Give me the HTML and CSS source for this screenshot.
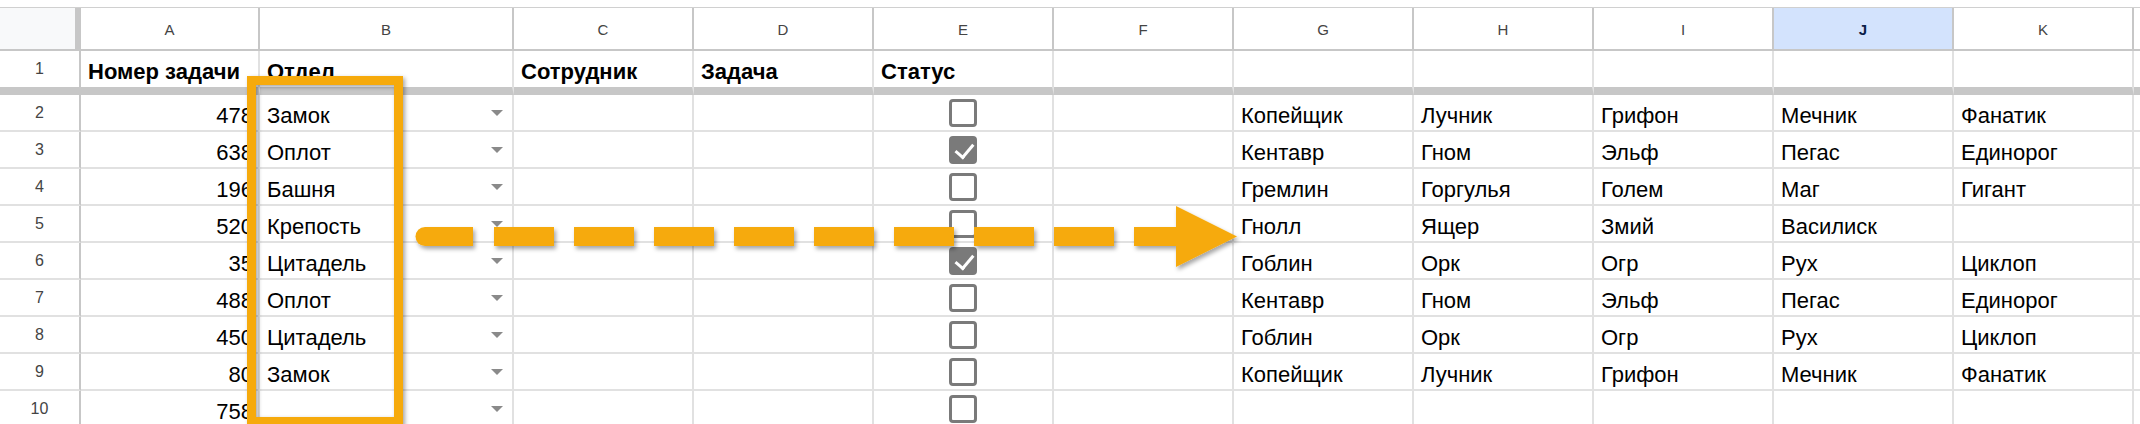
FILE: index.html
```html
<!DOCTYPE html>
<html lang="ru">
<head>
<meta charset="utf-8">
<title>Sheet</title>
<link rel="stylesheet" href="styles.css">
</head>
<body>
<div class="page">
<div class="sheet">
  <div class="corner"></div>
  <div class="ch">A</div><div class="ch">B</div><div class="ch">C</div><div class="ch">D</div><div class="ch">E</div><div class="ch">F</div><div class="ch">G</div><div class="ch">H</div><div class="ch">I</div><div class="ch ch-sel">J</div><div class="ch">K</div><div class="ch"></div>

  <div class="rh rh-frozen">1</div>
  <div class="c f b">Номер задачи</div><div class="c f b">Отдел</div><div class="c f b">Сотрудник</div><div class="c f b">Задача</div><div class="c f b">Статус</div><div class="c f"></div><div class="c f"></div><div class="c f"></div><div class="c f"></div><div class="c f"></div><div class="c f"></div><div class="c f"></div>

  <div class="rh">2</div>
  <div class="c num">478</div><div class="c dd">Замок<span class="arrow"></span></div><div class="c"></div><div class="c"></div><div class="c cb"><span class="box"></span></div><div class="c"></div><div class="c">Копейщик</div><div class="c">Лучник</div><div class="c">Грифон</div><div class="c">Мечник</div><div class="c">Фанатик</div><div class="c"></div>

  <div class="rh">3</div>
  <div class="c num">638</div><div class="c dd">Оплот<span class="arrow"></span></div><div class="c"></div><div class="c"></div><div class="c cb"><span class="box checked"></span></div><div class="c"></div><div class="c">Кентавр</div><div class="c">Гном</div><div class="c">Эльф</div><div class="c">Пегас</div><div class="c">Единорог</div><div class="c"></div>

  <div class="rh">4</div>
  <div class="c num">196</div><div class="c dd">Башня<span class="arrow"></span></div><div class="c"></div><div class="c"></div><div class="c cb"><span class="box"></span></div><div class="c"></div><div class="c">Гремлин</div><div class="c">Горгулья</div><div class="c">Голем</div><div class="c">Маг</div><div class="c">Гигант</div><div class="c"></div>

  <div class="rh">5</div>
  <div class="c num">520</div><div class="c dd">Крепость<span class="arrow"></span></div><div class="c"></div><div class="c"></div><div class="c cb"><span class="box"></span></div><div class="c"></div><div class="c">Гнолл</div><div class="c">Ящер</div><div class="c">Змий</div><div class="c">Василиск</div><div class="c"></div><div class="c"></div>

  <div class="rh">6</div>
  <div class="c num">35</div><div class="c dd">Цитадель<span class="arrow"></span></div><div class="c"></div><div class="c"></div><div class="c cb"><span class="box checked"></span></div><div class="c"></div><div class="c">Гоблин</div><div class="c">Орк</div><div class="c">Огр</div><div class="c">Рух</div><div class="c">Циклоп</div><div class="c"></div>

  <div class="rh">7</div>
  <div class="c num">488</div><div class="c dd">Оплот<span class="arrow"></span></div><div class="c"></div><div class="c"></div><div class="c cb"><span class="box"></span></div><div class="c"></div><div class="c">Кентавр</div><div class="c">Гном</div><div class="c">Эльф</div><div class="c">Пегас</div><div class="c">Единорог</div><div class="c"></div>

  <div class="rh">8</div>
  <div class="c num">450</div><div class="c dd">Цитадель<span class="arrow"></span></div><div class="c"></div><div class="c"></div><div class="c cb"><span class="box"></span></div><div class="c"></div><div class="c">Гоблин</div><div class="c">Орк</div><div class="c">Огр</div><div class="c">Рух</div><div class="c">Циклоп</div><div class="c"></div>

  <div class="rh">9</div>
  <div class="c num">80</div><div class="c dd">Замок<span class="arrow"></span></div><div class="c"></div><div class="c"></div><div class="c cb"><span class="box"></span></div><div class="c"></div><div class="c">Копейщик</div><div class="c">Лучник</div><div class="c">Грифон</div><div class="c">Мечник</div><div class="c">Фанатик</div><div class="c"></div>

  <div class="rh">10</div>
  <div class="c num">758</div><div class="c dd"><span class="arrow"></span></div><div class="c"></div><div class="c"></div><div class="c cb"><span class="box"></span></div><div class="c"></div><div class="c"></div><div class="c"></div><div class="c"></div><div class="c"></div><div class="c"></div><div class="c"></div>
</div>

<div class="highlight"></div>

<svg class="overlay" width="2140" height="424" viewBox="0 0 2140 424" aria-hidden="true">
  <defs>
    <filter id="sh" x="-5%" y="-30%" width="110%" height="170%">
      <feDropShadow dx="2" dy="3" stdDeviation="2" flood-color="#000" flood-opacity="0.35"/>
    </filter>
  </defs>
  <g fill="#f6aa0c" filter="url(#sh)">
    <path d="M425 227 H473 V246 H425 A9.5 9.5 0 0 1 425 227 Z"/>
    <rect x="494" y="227" width="60" height="19"/>
    <rect x="574" y="227" width="60" height="19"/>
    <rect x="654" y="227" width="60" height="19"/>
    <rect x="734" y="227" width="60" height="19"/>
    <rect x="814" y="227" width="60" height="19"/>
    <rect x="894" y="227" width="60" height="19"/>
    <rect x="974" y="227" width="60" height="19"/>
    <rect x="1054" y="227" width="60" height="19"/>
    <rect x="1134" y="227" width="50" height="19"/>
    <polygon points="1176,206 1237,236.5 1176,267"/>
  </g>
</svg>
</div>
</body>
</html>
```
FILE: styles.css
```css
* { box-sizing: border-box; }
html, body { margin: 0; padding: 0; background: #fff; }
body { font-family: "Liberation Sans", Arial, sans-serif; color: #000; }

.page { position: relative; width: 2140px; height: 424px; overflow: hidden; padding-top: 7px; }

.sheet {
  display: grid;
  grid-template-columns: 81px 179px 254px 180px 180px 180px 180px 180px 180px 180px 180px 180px 1fr;
  grid-template-rows: 43px 44px repeat(9, 37px);
  border-top: 1px solid #d0d0d0;
}

.corner {
  background: #f8f9fa;
  border-right: 6px solid #c7c7c7;
  border-bottom: 2px solid #c7c7c7;
}

.ch {
  display: flex; align-items: center; justify-content: center;
  font-size: 15px; color: #444;
  background: #fff;
  border-right: 2px solid #c7c7c7;
  border-bottom: 2px solid #c7c7c7;
  padding-top: 2px;
}
.ch-sel { background: #d3e3fd; color: #0b1f48; font-weight: bold; }

.rh {
  display: flex; align-items: center; justify-content: center;
  font-size: 16px; color: #444;
  border-right: 2px solid #c7c7c7;
  border-bottom: 2px solid #e1e1e1;
}
.rh-frozen { border-bottom: 8px solid #c7c7c7; }

.c {
  display: flex; align-items: flex-end;
  font-size: 22px; line-height: 25px;
  padding: 0 7px 2px 7px;
  border-right: 2px solid #e1e1e1;
  border-bottom: 2px solid #e1e1e1;
  white-space: nowrap;
  position: relative;
}
.f { border-bottom: 8px solid #c7c7c7; padding-bottom: 3px; }
.b { font-weight: bold; }
.num { justify-content: flex-end; padding-right: 5px; }

.arrow {
  position: absolute; right: 9px; top: 15px;
  width: 0; height: 0;
  border-left: 6px solid transparent;
  border-right: 6px solid transparent;
  border-top: 6px solid #8a8a8a;
}

.cb { align-items: center; justify-content: center; padding: 0; }
.box {
  width: 28px; height: 28px;
  border: 3px solid #7a7a7a;
  border-radius: 4px;
  background: #fff;
  position: relative;
}
.box.checked { background: #7a7a7a; }
.box.checked::after {
  content: "";
  position: absolute;
  left: 7px; top: 1px;
  width: 8px; height: 15px;
  border-right: 3px solid #fff;
  border-bottom: 3px solid #fff;
  transform: rotate(40deg);
}

.highlight {
  position: absolute;
  left: 247px; top: 76px;
  width: 156px; height: 350px;
  border: 9px solid #f6aa0c;
  filter: drop-shadow(2px 2px 2px rgba(0,0,0,0.35));
}

.overlay { position: absolute; left: 0; top: 0; pointer-events: none; }
```
